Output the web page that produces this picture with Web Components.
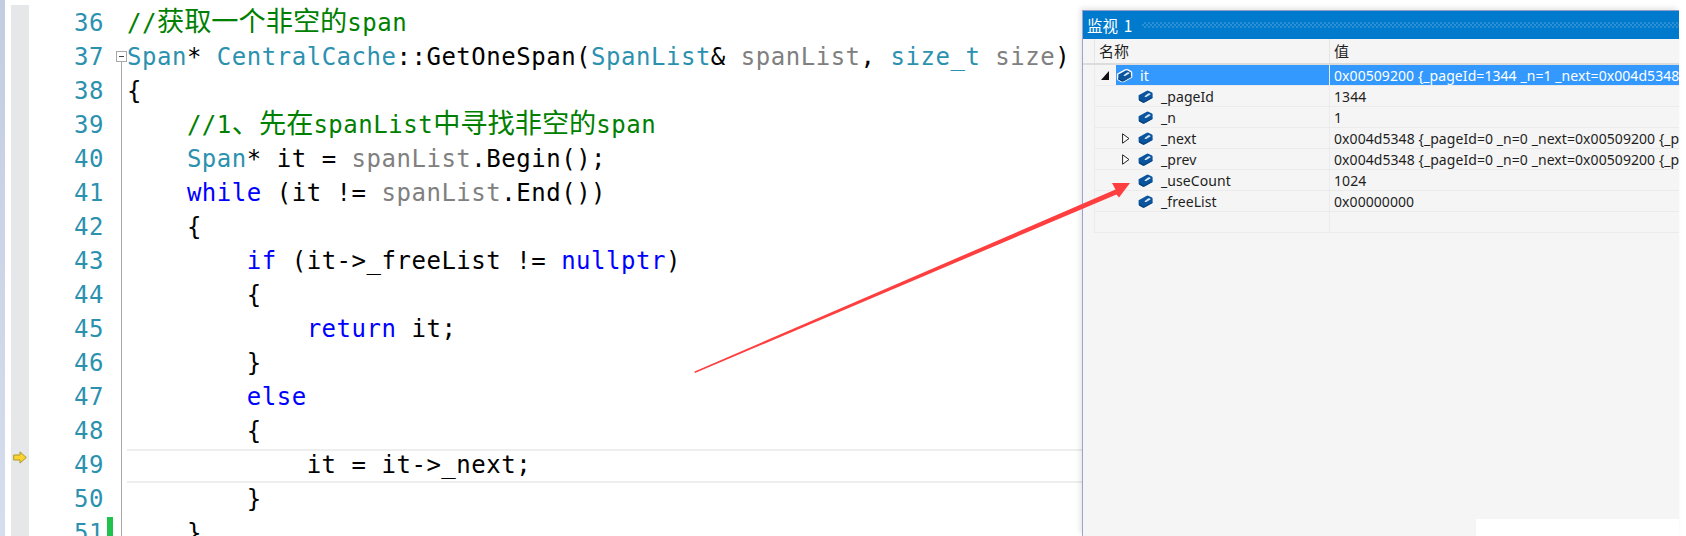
<!DOCTYPE html>
<html lang="zh-CN">
<head>
<meta charset="utf-8">
<title>监视</title>
<style>
html,body{margin:0;padding:0;background:#fff;overflow:hidden;height:536px}
</style>
</head>
<body>
<ide-screen>
  <code-editor slot="editor">
    <code-line n="36"><c-t k="cm">//<c-t k="cn">获取一个非空的</c-t>span</c-t></code-line>
    <code-line n="37" fold="start"><c-t k="ty">Span</c-t>* <c-t k="ty">CentralCache</c-t>::GetOneSpan(<c-t k="ty">SpanList</c-t>&amp; <c-t k="pa">spanList</c-t>, <c-t k="ty">size_t</c-t> <c-t k="pa">size</c-t>)</code-line>
    <code-line n="38" fold="mid">{</code-line>
    <code-line n="39" fold="mid">    <c-t k="cm">//1<c-t k="cn">、先在</c-t>spanList<c-t k="cn">中寻找非空的</c-t>span</c-t></code-line>
    <code-line n="40" fold="mid">    <c-t k="ty">Span</c-t>* it = <c-t k="pa">spanList</c-t>.Begin();</code-line>
    <code-line n="41" fold="mid">    <c-t k="kw">while</c-t> (it != <c-t k="pa">spanList</c-t>.End())</code-line>
    <code-line n="42" fold="mid">    {</code-line>
    <code-line n="43" fold="mid">        <c-t k="kw">if</c-t> (it-&gt;_freeList != <c-t k="kw">nullptr</c-t>)</code-line>
    <code-line n="44" fold="mid">        {</code-line>
    <code-line n="45" fold="mid">            <c-t k="kw">return</c-t> it;</code-line>
    <code-line n="46" fold="mid">        }</code-line>
    <code-line n="47" fold="mid">        <c-t k="kw">else</c-t></code-line>
    <code-line n="48" fold="mid">        {</code-line>
    <code-line n="49" fold="mid" current>            it = it-&gt;_next;</code-line>
    <code-line n="50" fold="mid">        }</code-line>
    <code-line n="51" fold="mid" changed>    }</code-line>
  </code-editor>
  <watch-panel slot="panel" caption="监视 1">
    <watch-row depth="0" state="open" selected name="it" value="0x00509200 {_pageId=1344 _n=1 _next=0x004d5348"></watch-row>
    <watch-row depth="1" name="_pageId" value="1344"></watch-row>
    <watch-row depth="1" name="_n" value="1"></watch-row>
    <watch-row depth="1" state="closed" name="_next" value="0x004d5348 {_pageId=0 _n=0 _next=0x00509200 {_p"></watch-row>
    <watch-row depth="1" state="closed" name="_prev" value="0x004d5348 {_pageId=0 _n=0 _next=0x00509200 {_p"></watch-row>
    <watch-row depth="1" name="_useCount" value="1024"></watch-row>
    <watch-row depth="1" name="_freeList" value="0x00000000"></watch-row>
    <watch-row empty></watch-row>
  </watch-panel>
  <red-arrow slot="overlay"></red-arrow>
</ide-screen>
<script>
function define(name, css, html, setup){
  customElements.define(name, class extends HTMLElement{
    constructor(){
      super();
      this.attachShadow({mode:'open'}).innerHTML='<style>'+css+'</style>'+(html||'');
    }
    connectedCallback(){ if(setup) setup.call(this,this.shadowRoot); }
  });
}
define('ide-screen',`
  :host{display:flex;position:relative;width:1686px;height:536px;overflow:hidden;background:#fff}
  ::slotted([slot=editor]){flex:0 0 1082px}
  ::slotted([slot=panel]){flex:0 0 597px}
`,`<slot name="editor"></slot><slot name="panel"></slot><slot name="overlay"></slot>`);

define('code-editor',`
  :host{display:flex;height:536px;overflow:hidden;background:#fff;
    font-family:"DejaVu Sans Mono","Noto Sans CJK SC",monospace;font-size:24px;letter-spacing:.52px;color:#000}
  .strip{flex:0 0 5px;background:linear-gradient(#c3cde1,#d6deed)}
  .gap{flex:0 0 6px}
  .margin{flex:0 0 18px;box-sizing:border-box;margin-top:5px;padding-top:446px;background:#e6e7e8;display:flex;justify-content:center;align-items:flex-start}
  .lines{flex:1;min-width:0;padding-top:7px;display:flex;flex-direction:column}
  svg{display:block}
`,`<div class="strip"></div><div class="gap"></div>
<div class="margin"><svg width="14" height="13" viewBox="0 0 14 13"><path d="M.7 4H7V.9L13.3 6.5 7 12.1V9H.7Z" fill="#fdd22e" stroke="#a89a2a" stroke-width="1"/></svg></div>
<div class="lines"><slot></slot></div>`);

define('code-line',`
  :host{display:grid;grid-template-columns:75px 3px 6px 14px 955px;height:34px;line-height:32px;flex:none;white-space:pre}
  .num{color:#2b91af;text-align:right}
  .chg.on{background:#1ec24c}
  .fold{position:relative}
  .fold.mid{background:linear-gradient(#a8a8a8,#a8a8a8) 8px 0/1px 100% no-repeat}
  .fold.start{background:linear-gradient(#a8a8a8,#a8a8a8) 8px 21px/1px 13px no-repeat}
  .box{position:absolute;left:3px;top:10px;width:9px;height:9px;border:1px solid #a8a8a8;background:#fff;box-sizing:content-box}
  .box::after{content:"";position:absolute;left:2px;right:2px;top:4px;height:1px;background:#444}
  .code{overflow:hidden;box-sizing:border-box;height:34px}
  .code.cur{border-top:2px solid #eeeeee;border-bottom:2px solid #eeeeee;line-height:28px}
`,`<div class="num"></div><div></div><div class="chg"></div><div class="fold"></div><div class="code"><slot></slot></div>`,
function(r){
  r.querySelector('.num').textContent=this.getAttribute('n');
  const f=this.getAttribute('fold'),fd=r.querySelector('.fold');
  if(f){fd.classList.add(f); if(f==='start')fd.innerHTML='<div class="box"></div>';}
  if(this.hasAttribute('changed'))r.querySelector('.chg').classList.add('on');
  if(this.hasAttribute('current'))r.querySelector('.code').classList.add('cur');
});

define('c-t',`
  :host{display:inline}
  :host([k=kw]){color:#0000ff}
  :host([k=ty]){color:#2b91af}
  :host([k=pa]){color:#808080}
  :host([k=cm]){color:#008000}
  :host([k=cn]){font-family:"Noto Sans CJK SC",sans-serif;font-size:27.2px;letter-spacing:0;line-height:0}
`,`<slot></slot>`);

define('watch-panel',`
  :host{display:flex;flex-direction:column;position:relative;box-sizing:border-box;height:526px;margin-top:10px;
    background:#f5f5f5;border-left:1px solid #9ba3cc;border-top:1px solid #8f9bc9;
    box-shadow:-2px -2px 5px rgba(0,0,0,.10);
    font-family:"Noto Sans","Noto Sans CJK SC",sans-serif;font-size:14px;letter-spacing:.07px;color:#1e1e1e}
  .title{flex:0 0 28px;background:#007acc;color:#fff;display:flex;align-items:center;padding-left:4px;gap:10px;font-family:"Noto Sans CJK SC",sans-serif;font-size:15.5px;word-spacing:2px;overflow:hidden}
  .title span{white-space:nowrap}
  .dots{flex:1;height:6px;background:repeating-conic-gradient(#2d8fd3 0 25%,#007acc 0 50%) 0 0/4px 4px}
  .head{flex:0 0 25px;box-sizing:border-box;display:grid;grid-template-columns:11px 235px 1px 1fr;border-bottom:2px solid #dcdcdc;font-family:"Noto Sans CJK SC",sans-serif;font-size:15px;line-height:24px}
  .head .n{border-left:1px solid #e6e6e6;padding-left:4px}
  .head .s{background:#e6e6e6}
  .head .v{padding-left:4px}
  .patch{position:absolute;left:393px;top:508px;width:203px;height:17px;background:#fff}
`,`<div class="title"><span></span><div class="dots"></div></div>
<div class="head"><div></div><div class="n">名称</div><div class="s"></div><div class="v">值</div></div>
<slot></slot><div class="patch"></div>`,
function(r){ r.querySelector('.title span').textContent=this.getAttribute('caption'); });

define('watch-row',`
  :host{display:grid;grid-template-columns:11px 235px 1px 1fr;height:21px;flex:none;line-height:22px;white-space:nowrap;overflow:hidden}
  .name{display:flex;box-sizing:border-box;border-left:1px solid #ebebeb;border-bottom:1px solid #ebebeb;min-width:0;height:21px}
  .exp{flex:0 0 8px;margin-right:7px;display:flex;align-items:center}
  .sel{flex:1;display:flex;align-items:center;padding-left:1px;min-width:0}
  .lab{height:20px}
  .sep{background:#ebebeb}
  .val{box-sizing:border-box;border-bottom:1px solid #ebebeb;padding-left:4px;overflow:hidden;height:21px}
  cube-icon{margin-right:8px}
  :host([selected]) .sel,:host([selected]) .val{background:#3399ff;color:#fff}
  svg{display:block}
`,`<div></div><div class="name"><div class="exp"></div><div class="sel"><span class="lab"></span></div></div><div class="sep"></div><div class="val"></div>`,
function(r){
  if(this.hasAttribute('empty'))return;
  r.querySelector('.name').style.paddingLeft=(6+21*(+this.getAttribute('depth')))+'px';
  r.querySelector('.lab').textContent=this.getAttribute('name');
  r.querySelector('.val').textContent=this.getAttribute('value');
  const ic=document.createElement('cube-icon');
  if(this.hasAttribute('selected'))ic.setAttribute('outlined','');
  r.querySelector('.sel').prepend(ic);
  const s=this.getAttribute('state'),e=r.querySelector('.exp');
  if(s==='open')e.innerHTML='<svg width="8" height="9" viewBox="0 0 8 9"><path d="M8 0V9H0Z" fill="#111"/></svg>';
  if(s==='closed')e.innerHTML='<svg width="8" height="11" viewBox="0 0 8 11"><path d="M.6.8 7 5.5.6 10.2Z" fill="#fff" stroke="#222" stroke-width="1"/></svg>';
});

define('cube-icon',`
  :host{display:block;flex:none;width:15px;height:13px}
  svg{display:block;overflow:visible}
  :host([outlined]) .o{stroke:#fff;stroke-width:1.4}
`,`<svg width="15" height="13" viewBox="0 0 15 13">
  <path class="o" d="M.6 5.2 8.4.9Q9.6.3 10.9.9L14 2.6Q14.6 3 14.6 3.8V8L6.9 12.3Q5.6 13 4.2 12.3L1.2 10.6Q.6 10.2.6 9.5Z" fill="#0b559f"/>
  <path d="M6.5 6.2 10 3.6Q11 3 12 3.5L12.5 4Q12.7 4.4 12 4.8L8.6 6.8Q7.8 7.2 7 6.9Z" fill="#d6e7f7"/>
  <path d="M1 9 6 11.6 14.4 7.2V8L6.9 12.3Q5.6 13 4.2 12.3L1.2 10.6Z" fill="#08407c"/>
</svg>`);

define('red-arrow',`
  :host{position:absolute;left:0;top:0;width:1686px;height:536px;pointer-events:none}
  svg{display:block}
`,`<svg width="1686" height="536" viewBox="0 0 1686 536"><path d="M694.5 371.5 1115.5 189.5 1112 183 1130 183 1119 197.5 1116.5 194.5 695 373Z" fill="#ff3f3f"/></svg>`);
</script>
</body>
</html>
